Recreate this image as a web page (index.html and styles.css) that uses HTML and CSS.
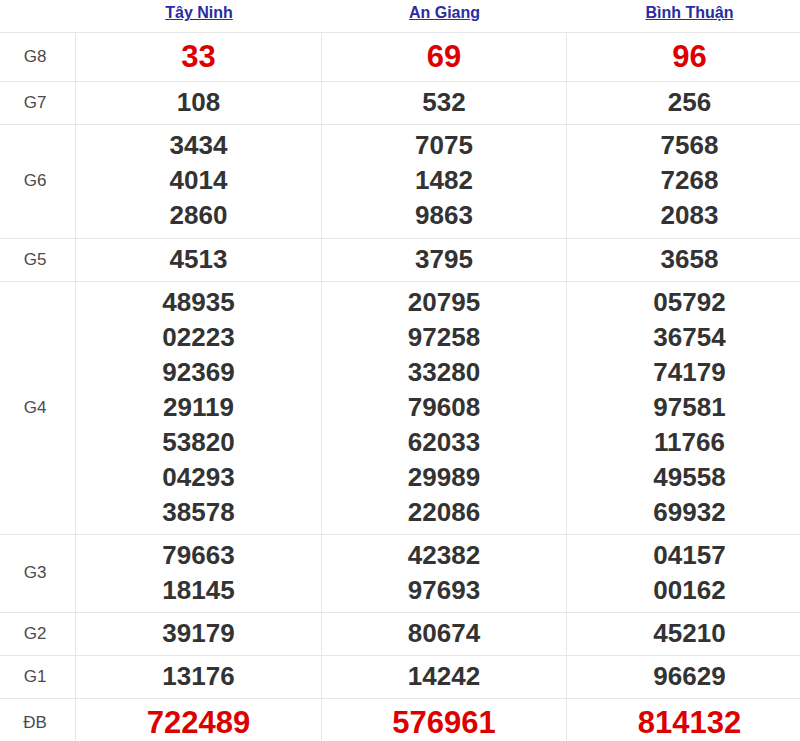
FILE: index.html
```html
<!DOCTYPE html>
<html lang="vi">
<head>
<meta charset="utf-8">
<title>Kết quả xổ số</title>
<link rel="stylesheet" href="styles.css">
</head>
<body>
<div class="wrap">
<table class="kq">
  <colgroup>
    <col class="c-label">
    <col class="c-prov1">
    <col class="c-prov2">
    <col class="c-prov3">
  </colgroup>
  <thead>
    <tr>
      <th class="h-empty"></th>
      <th><a href="#">Tây Ninh</a></th>
      <th><a href="#">An Giang</a></th>
      <th><a href="#">Bình Thuận</a></th>
    </tr>
  </thead>
  <tbody>
    <tr>
      <td class="lbl">G8</td>
      <td><div class="n big">33</div></td>
      <td><div class="n big">69</div></td>
      <td><div class="n big">96</div></td>
    </tr>
    <tr>
      <td class="lbl">G7</td>
      <td><div class="n">108</div></td>
      <td><div class="n">532</div></td>
      <td><div class="n">256</div></td>
    </tr>
    <tr class="r-g6">
      <td class="lbl">G6</td>
      <td><div class="n">3434</div><div class="n">4014</div><div class="n">2860</div></td>
      <td><div class="n">7075</div><div class="n">1482</div><div class="n">9863</div></td>
      <td><div class="n">7568</div><div class="n">7268</div><div class="n">2083</div></td>
    </tr>
    <tr>
      <td class="lbl">G5</td>
      <td><div class="n">4513</div></td>
      <td><div class="n">3795</div></td>
      <td><div class="n">3658</div></td>
    </tr>
    <tr>
      <td class="lbl">G4</td>
      <td><div class="n">48935</div><div class="n">02223</div><div class="n">92369</div><div class="n">29119</div><div class="n">53820</div><div class="n">04293</div><div class="n">38578</div></td>
      <td><div class="n">20795</div><div class="n">97258</div><div class="n">33280</div><div class="n">79608</div><div class="n">62033</div><div class="n">29989</div><div class="n">22086</div></td>
      <td><div class="n">05792</div><div class="n">36754</div><div class="n">74179</div><div class="n">97581</div><div class="n">11766</div><div class="n">49558</div><div class="n">69932</div></td>
    </tr>
    <tr>
      <td class="lbl">G3</td>
      <td><div class="n">79663</div><div class="n">18145</div></td>
      <td><div class="n">42382</div><div class="n">97693</div></td>
      <td><div class="n">04157</div><div class="n">00162</div></td>
    </tr>
    <tr>
      <td class="lbl">G2</td>
      <td><div class="n">39179</div></td>
      <td><div class="n">80674</div></td>
      <td><div class="n">45210</div></td>
    </tr>
    <tr>
      <td class="lbl">G1</td>
      <td><div class="n">13176</div></td>
      <td><div class="n">14242</div></td>
      <td><div class="n">96629</div></td>
    </tr>
    <tr>
      <td class="lbl">ĐB</td>
      <td><div class="n big">722489</div></td>
      <td><div class="n big">576961</div></td>
      <td><div class="n big">814132</div></td>
    </tr>
  </tbody>
</table>
</div>
</body>
</html>
```
FILE: styles.css
```css
html, body {
  margin: 0;
  padding: 0;
  background: #ffffff;
}

body {
  font-family: "Liberation Sans", Arial, sans-serif;
  color: #333333;
}

.wrap {
  width: 800px;
  overflow: hidden;
}

.kq {
  width: 812px;
  table-layout: fixed;
  border-collapse: separate;
  border-spacing: 0;
}

.c-label { width: 76px; }
.c-prov1 { width: 246px; }
.c-prov2 { width: 245px; }
.c-prov3 { width: 245px; }

.kq th {
  padding: 4px 0 10px;
  line-height: 18px;
  font-size: 16px;
  font-weight: bold;
  text-align: center;
  border-bottom: 1px solid #e6e6e6;
}

.kq th a {
  color: #2b2ba3;
  text-decoration: underline;
}

.kq td {
  padding: 3px 0 4px;
  text-align: center;
  vertical-align: middle;
  border-bottom: 1px solid #e6e6e6;
  border-right: 1px solid #e6e6e6;
}

.kq .r-g6 td {
  padding-bottom: 5px;
}

.kq td:last-child {
  border-right: none;
}

.kq td.lbl {
  padding-right: 5px;
  font-size: 17px;
  color: #4a4a4a;
}

.n {
  font-size: 26px;
  line-height: 35px;
  font-weight: bold;
  color: #333333;
}

.n.big {
  font-size: 31px;
  line-height: 41px;
  color: #dd0000;
}
```
